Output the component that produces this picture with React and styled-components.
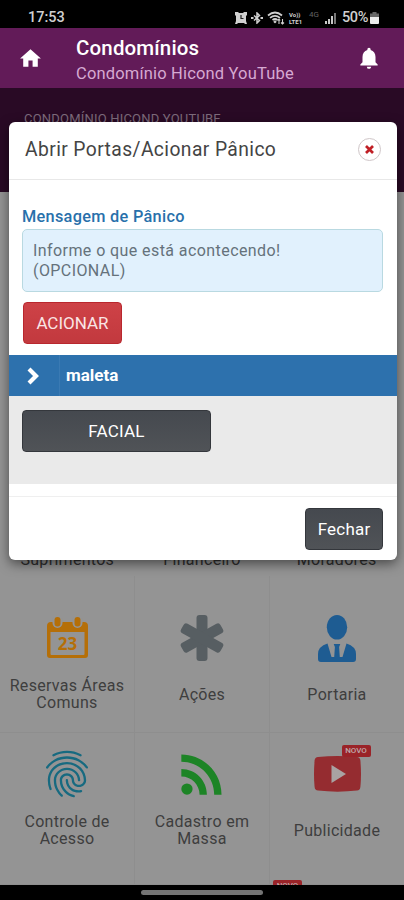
import React from "react";
import styled, { createGlobalStyle } from "styled-components";
import { MdHome, MdNotifications, MdFingerprint, MdRssFeed } from "react-icons/md";

const StatusBar = () => (
  <StatusWrapper>
    <Clock>17:53</Clock>
    <StatusIcons>
      <svg width="12" height="12" viewBox="0 0 12 12">
        <path d="M0 0h3l1 1h4l1-1h3v3l-1 1v5l1 3h-2l-1-1H3l-1 1H0l1-3V4L0 3z" fill="#d0d0d0" />
        <path d="M6 3v3.500h2.500" fill="none" stroke="#222" strokeWidth="1.200" />
      </svg>
      <svg width="12" height="12" viewBox="0 0 12 12" fill="none" stroke="#d0d0d0" strokeWidth="1.500">
        <path d="M3 3.500l5.500 5L6 11V1l2.500 2.500L3 8.500" />
        <path d="M0 6h2.500M9.500 6H12" strokeWidth="2" />
      </svg>
      <svg width="18" height="14" viewBox="0 0 18 14" fill="none" stroke="#d0d0d0">
        <path d="M1 4.5Q8 -1.5 15 4.5M3 6.8Q8 2.8 13 6.8M5.5 9Q8 7 10.5 9" strokeWidth="1.7" />
        <circle cx="8" cy="10.8" r="1" fill="#d0d0d0" />
        <path d="M12 13V8M10.5 9.5L12 8l1.2 1.5M15.5 8v5M14 11.5l1.5 1.5 1.5-1.5" strokeWidth="1.1" />
      </svg>
      <Volte>
        <span>Vo))</span>
        <span>LTE1</span>
      </Volte>
      <Network>4G</Network>
      <svg width="12" height="12" viewBox="0 0 12 12" fill="#c8c8c8">
        <path d="M0 9h2v3H0zM3 7h2v5H3zM6 4h2v8H6z" />
        <path d="M9 1h2v11H9z" fill="#777" />
      </svg>
      <Percent>50%</Percent>
      <svg width="9" height="12" viewBox="0 0 9 12">
        <path d="M2.5 0h4v1.5H9V6H0V1.5h2.5z" fill="#666" />
        <path d="M0 5h9v6q0 1-1 1H1q-1 0-1-1z" fill="#ececec" />
      </svg>
    </StatusIcons>
  </StatusWrapper>
);

const CalendarIcon = () => (
  <svg width="41" height="42" viewBox="0 0 41 42">
    <path
      fillRule="evenodd"
      fill="#b56f08"
      d="M4 5h33q4 0 4 4v29q0 3-3 3H3q-3 0-3-3V9q0-4 4-4zM3.500 15v22q0 1 1 1h32q1 0 1-1V15z"
    />
    <rect x="5.500" y="-1" width="10" height="12" rx="5" fill="#949494" />
    <rect x="25.500" y="-1" width="10" height="12" rx="5" fill="#949494" />
    <rect x="7.5" y="0" width="6" height="9.5" rx="3" fill="#b56f08" />
    <rect x="27.5" y="0" width="6" height="9.5" rx="3" fill="#b56f08" />
    <text
      x="20.5"
      y="33"
      textAnchor="middle"
      fontFamily="Open Sans, sans-serif"
      fontWeight="700"
      fontSize="17"
      fill="#b56f08"
    >
      23
    </text>
  </svg>
);

const AsteriskIcon = () => (
  <svg width="46" height="46" viewBox="-23 -23 46 46" fill="#575e62">
    <rect x="-5.500" y="-23" width="11" height="46" rx="3" />
    <rect x="-5.500" y="-22.500" width="11" height="45" rx="3" transform="rotate(61)" />
    <rect x="-5.500" y="-22.500" width="11" height="45" rx="3" transform="rotate(-61)" />
  </svg>
);

const PersonIcon = () => (
  <svg width="38" height="47" viewBox="0 0 38 47" fill="#1e5c92">
    <ellipse cx="19" cy="12.3" rx="10.2" ry="12.3" />
    <path d="M9.5 28.5L13.5 42h2.7l.7-10-1.2-3h6.6l-1.2 3 .7 10h2.7L28.5 28.5Q38 31.5 38 39v5q0 3-3 3H3q-3 0-3-3v-5q0-7.5 9.5-10.5z" />
  </svg>
);

const VideoIcon = () => (
  <svg width="47" height="36" viewBox="0 0 47 36">
    <path
      d="M4 1Q23.5-.8 43 1q3 .3 3.4 3.500Q47.600 18 46.400 31q-.4 3.200-3.400 3.600Q23.500 36.800 4 34.600 1 34.200.6 31-.6 18 .6 4.500 1 1.300 4 1z"
      fill="#952c30"
    />
    <path d="M17.500 9v18L32 18z" fill="#a9a3a3" />
  </svg>
);

const tiles = [
  { label: "Reservas Áreas Comuns", icon: <CalendarIcon /> },
  { label: "Ações", icon: <AsteriskIcon /> },
  { label: "Portaria", icon: <PersonIcon /> },
  { label: "Controle de Acesso", icon: <MdFingerprint size={56} color="#176a80" /> },
  { label: "Cadastro em Massa", icon: <MdRssFeed size={62} color="#1d8426" /> },
  { label: "Publicidade", icon: <VideoIcon />, isNew: true },
];

const PanicModal = () => (
  <Modal>
    <ModalHeader>
      <ModalTitle>Abrir Portas/Acionar Pânico</ModalTitle>
      <CloseButton>
        <svg width="9" height="9" viewBox="0 0 9 9" stroke="#c01f25" strokeWidth="2.7">
          <path d="M1 1l7 7M8 1L1 8" />
        </svg>
      </CloseButton>
    </ModalHeader>
    <ModalBody>
      <Label>Mensagem de Pânico</Label>
      <Message>
        Informe o que está acontecendo!
        <br />
        (OPCIONAL)
      </Message>
      <DangerButton>ACIONAR</DangerButton>
    </ModalBody>
    <DeviceRow>
      <Arrow>
        <svg width="13" height="18" viewBox="0 0 13 18" fill="none" stroke="#fff" strokeWidth="4.200">
          <path d="M2 2l7 7-7 7" />
        </svg>
      </Arrow>
      <DeviceName>maleta</DeviceName>
    </DeviceRow>
    <DoorArea>
      <DoorButton>FACIAL</DoorButton>
    </DoorArea>
    <ModalFooter>
      <DarkButton>Fechar</DarkButton>
    </ModalFooter>
  </Modal>
);

const App = () => {
  return (
    <Phone>
      <GlobalStyle />
      <StatusBar />
      <AppBar>
        <HomeButton>
          <MdHome size={25} />
        </HomeButton>
        <Titles>
          <Title>Condomínios</Title>
          <Subtitle>Condomínio Hicond YouTube</Subtitle>
        </Titles>
        <MdNotifications size={26} />
      </AppBar>
      <Content>
        <Banner>CONDOMÍNIO HICOND YOUTUBE</Banner>
        <HiddenRow>
          <span>Suprimentos</span>
          <span>Financeiro</span>
          <span>Moradores</span>
        </HiddenRow>
        <Grid>
          {tiles.map((tile, index) => (
            <Tile key={tile.label} $top={index < 3 ? 29 : 8}>
              <IconBox>
                {tile.icon}
                {tile.isNew && <Badge>NOVO</Badge>}
              </IconBox>
              <TileLabel>
                <span>{tile.label}</span>
              </TileLabel>
            </Tile>
          ))}
        </Grid>
        <NextBadge>NOVO</NextBadge>
      </Content>
      <NavBar>
        <Handle />
      </NavBar>
      <PanicModal />
    </Phone>
  );
};

const GlobalStyle = createGlobalStyle`
  * {
    box-sizing: border-box;
  }
  body {
    margin: 0;
    font-family: Roboto, sans-serif;
    background: #000;
  }
  svg {
    display: block;
    flex-shrink: 0;
  }
  button {
    font-family: inherit;
  }
`;

const Phone = styled.div`
  position: relative;
  width: 404px;
  height: 900px;
  display: flex;
  flex-direction: column;
  overflow: hidden;
`;

const StatusWrapper = styled.div`
  height: 28px;
  padding: 6px 25px 0 28px;
  display: flex;
  justify-content: space-between;
  background: #000;
  color: #d0d0d0;
`;

const Clock = styled.div`
  font-size: 14.5px;
  line-height: 23px;
  font-weight: 500;
`;

const StatusIcons = styled.div`
  height: 23px;
  display: flex;
  align-items: center;
  gap: 4px;
`;

const Volte = styled.div`
  width: 16px;
  display: flex;
  flex-direction: column;
  font-size: 6px;
  line-height: 7px;
  font-weight: 700;
`;

const Network = styled.div`
  width: 12px;
  font-size: 8px;
  color: #626262;
  align-self: flex-start;
  padding-top: 4px;
`;

const Percent = styled.div`
  padding-left: 1px;
  margin-right: -2px;
  font-size: 14.5px;
  font-weight: 500;
  letter-spacing: -0.4px;
`;

const AppBar = styled.div`
  height: 60px;
  padding: 0 22px 0 18px;
  display: flex;
  align-items: center;
  background: #621b58;
  color: #fff;
`;

const HomeButton = styled.div`
  width: 58px;
`;

const Titles = styled.div`
  flex: 1;
  padding-top: 4px;
`;

const Title = styled.div`
  font-size: 20.5px;
  line-height: 26px;
  font-weight: 500;
  letter-spacing: 0.15px;
`;

const Subtitle = styled.div`
  font-size: 16.5px;
  line-height: 25px;
  letter-spacing: 0.17px;
  color: #d6a9d2;
`;

const Content = styled.div`
  position: relative;
  height: 797px;
  overflow: hidden;
  background: #949494;
`;

const Banner = styled.div`
  height: 104px;
  padding: 23px 24px;
  font-size: 13px;
  line-height: 16px;
  letter-spacing: 0.2px;
  background: #290a25;
  color: #7d6a7b;
`;

const HiddenRow = styled.div`
  height: 384px;
  padding-bottom: 7px;
  display: grid;
  grid-template-columns: repeat(3, 1fr);
  align-items: end;
  justify-items: center;
  font-size: 16px;
  line-height: 18px;
  letter-spacing: 0.3px;
  color: #303030;
`;

const Grid = styled.div`
  display: grid;
  grid-template-columns: 135px 135px 134px;
  grid-template-rows: 157px 152px;
`;

const Tile = styled.div`
  padding-top: ${(props) => props.$top}px;
  display: flex;
  flex-direction: column;
  align-items: center;
  border-bottom: 1px solid #8e8e8e;
  border-right: 1px solid #8e8e8e;

  &:nth-child(3n) {
    border-right: none;
  }
`;

const IconBox = styled.div`
  position: relative;
  height: 66px;
  display: flex;
  align-items: center;
`;

const TileLabel = styled.div`
  height: 46px;
  width: 124px;
  display: flex;
  align-items: center;
  justify-content: center;
  text-align: center;
  font-size: 16px;
  line-height: 17px;
  letter-spacing: 0.3px;
  color: #3e3e3e;
`;

const Badge = styled.div`
  position: absolute;
  top: 4px;
  right: -10px;
  width: 29px;
  height: 12px;
  border-radius: 2px;
  background: #9a2328;
  color: #bfa9aa;
  font-size: 8px;
  line-height: 12px;
  font-weight: 500;
  text-align: center;
`;

const NextBadge = styled(Badge)`
  top: 792px;
  right: 102px;
`;

const NavBar = styled.div`
  height: 15px;
  display: flex;
  justify-content: center;
  padding-top: 5px;
  background: #000;
`;

const Handle = styled.div`
  width: 122px;
  height: 5px;
  border-radius: 3px;
  background: #747474;
`;

const Modal = styled.div`
  position: absolute;
  top: 122px;
  left: 9px;
  width: 388px;
  height: 438px;
  border-radius: 6px;
  overflow: hidden;
  background: #fff;
  box-shadow: 0 4px 12px rgba(0, 0, 0, 0.5);
`;

const ModalHeader = styled.div`
  height: 58px;
  padding: 0 16px;
  display: flex;
  align-items: center;
  justify-content: space-between;
  border-bottom: 1px solid #e8e8e8;
`;

const ModalTitle = styled.div`
  font-size: 19.3px;
  letter-spacing: 0.4px;
  color: #444;
  padding-bottom: 2px;
`;

const CloseButton = styled.button`
  width: 23px;
  height: 23px;
  padding: 0;
  margin-bottom: 2px;
  display: flex;
  align-items: center;
  justify-content: center;
  border: 1px solid #cfc6c8;
  border-radius: 50%;
  background: #fff;
`;

const ModalBody = styled.div`
  height: 175px;
  padding: 26px 14px 0 13px;
`;

const Label = styled.div`
  font-size: 16.3px;
  line-height: 21px;
  font-weight: 500;
  letter-spacing: 0.3px;
  color: #2870ab;
`;

const Message = styled.div`
  height: 63px;
  margin-top: 2px;
  padding: 11px 10px;
  border: 1px solid #b9d9e1;
  border-radius: 5px;
  background: #e1f1fd;
  font-size: 16px;
  line-height: 20px;
  letter-spacing: 0.42px;
  color: #65727b;
`;

const Button = styled.button`
  height: 42px;
  padding: 0 0 1px;
  border-radius: 4px;
  font-size: 17px;
  color: #fff;
`;

const DangerButton = styled(Button)`
  width: 99px;
  margin: 10px 0 0 1px;
  display: block;
  border: 1px solid #b9272e;
  background: linear-gradient(#ce4247, #c2393e);
  color: #fae5e5;
`;

const DarkButton = styled(Button)`
  width: 78px;
  border: 1px solid #34373c;
  background: linear-gradient(#45494f, #505357);
  letter-spacing: 0.2px;
`;

const DoorButton = styled(DarkButton)`
  width: 189px;
`;

const DeviceRow = styled.div`
  height: 41px;
  display: flex;
  align-items: center;
  background: #2d71ad;
  color: #fff;
`;

const Arrow = styled.div`
  width: 51px;
  height: 100%;
  padding-left: 18px;
  display: flex;
  align-items: center;
  border-right: 1px solid #3a7ab3;
`;

const DeviceName = styled.div`
  padding: 0 0 2px 6px;
  font-size: 17px;
  font-weight: 700;
`;

const DoorArea = styled.div`
  height: 88px;
  padding: 14px 13px;
  background: #eaeaea;
`;

const ModalFooter = styled.div`
  height: 64px;
  margin-top: 12px;
  padding: 11px 14px 0;
  display: flex;
  justify-content: flex-end;
  border-top: 1px solid #efefef;
`;

export default App;
